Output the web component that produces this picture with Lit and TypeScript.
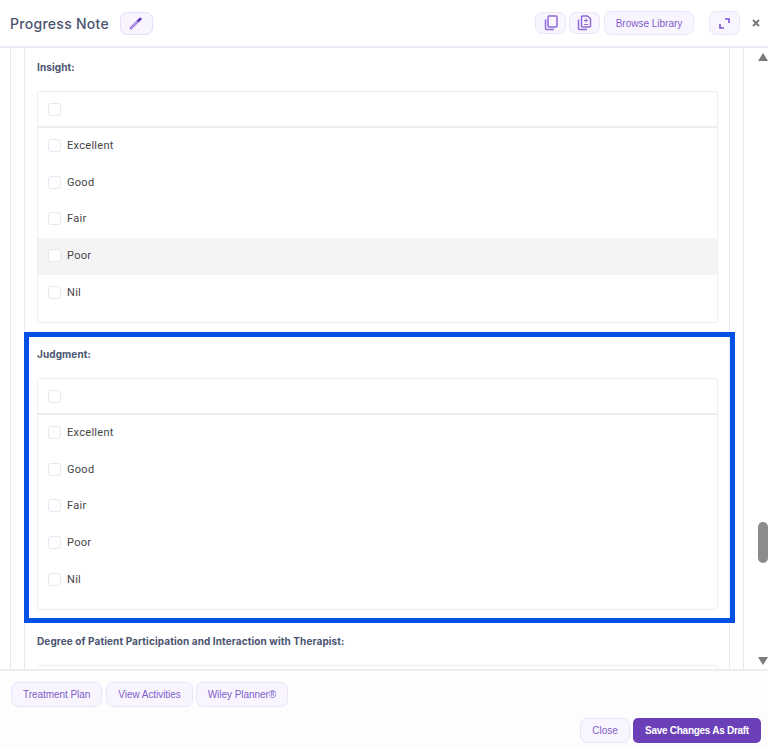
import { LitElement, html, css } from "lit";
import { customElement } from "lit/decorators.js";

const OPTIONS = ["Excellent", "Good", "Fair", "Poor", "Nil"];

@customElement("app-root")
export class AppRoot extends LitElement {
  static styles = css`
    :host { display: flex; flex-direction: column; width: 768px; height: 747px; background: #fff; font-family: Inter, "Liberation Sans", sans-serif; overflow: hidden; position: relative; }
    * { box-sizing: border-box; }
    .header { height: 48px; flex: none; display: flex; align-items: center; padding: 0 5px 0 10px; border-bottom: 2px solid #eceaf6; }
    .title { font-size: 14px; font-weight: 500; color: #4a5470; letter-spacing: 0.28px; margin-right: 11px; }
    .btn { display: inline-flex; align-items: center; justify-content: center; background: #f8f5ff; border: 1.5px solid #ebe4fb; border-radius: 7px; color: #7f5cc8; font-size: 10px; font-family: "Liberation Sans", sans-serif; white-space: nowrap; }
    .edit { width: 33px; height: 23px; border-color: #e6dcfb; }
    .spacer { flex: 1; }
    .icon { width: 31px; height: 22px; margin-right: 3px; }
    .icon.second { margin-right: 4px; }
    .lib { width: 90px; height: 24px; margin-right: 15px; }
    .expand { width: 31px; height: 24px; }
    .x { width: 14px; margin-left: 9px; display: flex; justify-content: center; }
    .body { flex: 1; min-height: 0; display: flex; overflow: hidden; }
    .outer { width: 734px; margin-left: 10px; padding: 0 13px; border-left: 1px solid #eaeaf6; border-right: 1px solid #eaeaf6; }
    .inner { height: 100%; border-left: 1px solid #eaeaf6; border-right: 1px solid #eaeaf6; padding-top: 2px; }
    .section { height: 281px; margin: 0 0 6px 4px; padding: 10.5px 11px 0 8px; }
    .section.mark { outline: 5px solid #0350e4; margin-right: -1px; padding-right: 12px; }
    .label { font-size: 10px; font-weight: 700; color: #4a5470; height: 12px; line-height: 12px; letter-spacing: 0.1px; }
    .card { margin-top: 18.5px; height: 232px; border: 1px solid #eeeef2; border-radius: 3px; }
    .top { height: 36px; display: flex; align-items: center; padding-left: 10px; border-bottom: 2px solid #ececf2; }
    .row { height: 36.7px; display: flex; align-items: center; padding: 0 0 2px 10px; gap: 6px; font-size: 11px; color: #444; font-family: Roboto, sans-serif; letter-spacing: 0.3px; }
    .row.hover { background: #f4f4f4; }
    .check { width: 13px; height: 13px; border: 1px solid #e6e8f2; border-radius: 3px; background: #fff; flex: none; }
    .sb { flex: 1; position: relative; }
    .up, .down { position: absolute; left: 14px; width: 0; height: 0; border-left: 5px solid transparent; border-right: 5px solid transparent; }
    .up { top: 5px; border-bottom: 8px solid #7b7b7b; }
    .down { bottom: 4px; border-top: 8px solid #7b7b7b; }
    .thumb { position: absolute; left: 14px; top: 474px; width: 10px; height: 41px; background: #8b8b8b; border-radius: 5px; }
    .footer { height: 78px; flex: none; border-top: 2px solid #eeeef2; background: #fdfdfd; display: flex; flex-direction: column; padding: 11px 7px 0 11px; }
    .links { display: flex; gap: 4px; }
    .links .btn { height: 25px; padding: 0 11px; font-size: 10px; letter-spacing: -0.05px; }
    .links .btn:nth-child(2) { margin-right: -1px; }
    .actions { display: flex; justify-content: flex-end; gap: 3px; margin-top: 11px; }
    .close { width: 50px; height: 25px; font-size: 10px; }
    .save { width: 128px; height: 25px; background: #6b3fb8; border-radius: 5px; color: #fff; font-family: "Liberation Sans", sans-serif; font-size: 10px; font-weight: 700; letter-spacing: -0.28px; display: inline-flex; align-items: center; justify-content: center; }
    svg { display: block; }
  `;

  card(name: string, cls: string, options: string[], hover?: string) {
    return html`<div class="section ${cls}">
      <div class="label">${name}</div>
      <div class="card">
        <div class="top"><span class="check"></span></div>
        ${options.map((o) => html`<div class="row ${o === hover ? "hover" : ""}"><span class="check"></span>${o}</div>`)}
      </div>
    </div>`;
  }

  render() {
    return html`
      <div class="header">
        <span class="title">Progress Note</span>
        <span class="btn edit"><svg width="14" height="14" viewBox="0 0 14 14" fill="none" stroke-linecap="round"><path d="M2 12.2L10 4.2" stroke="#9268e0" stroke-width="2.6"/><path d="M9 5.2L11.4 2.8" stroke="#5f35b8" stroke-width="2.6"/><path d="M2.6 11.6L9 5.2" stroke="#e4d8fa" stroke-width="0.8"/></svg></span>
        <span class="spacer"></span>
        <span class="btn icon"><svg width="14" height="16" viewBox="0 0 14 16" fill="none" stroke="#8f69d6" stroke-width="1.5"><rect x="4" y="1" width="9" height="11" rx="1"/><path d="M1.5 4.5v9a1 1 0 0 0 1 1h7.5"/></svg></span>
        <span class="btn icon second"><svg width="15" height="16" viewBox="0 0 15 16" fill="none" stroke="#8f69d6" stroke-width="1.5"><path d="M5.5 1h5l3 3v7a1 1 0 0 1-1 1h-7a1 1 0 0 1-1-1V2a1 1 0 0 1 1-1z"/><path d="M1.5 4.5v9a1 1 0 0 0 1 1h7.5"/><path d="M9 3.5v4M7 5.5h4M7 9.5h4" stroke-width="1.1"/></svg></span>
        <span class="btn lib">Browse Library</span>
        <span class="btn expand"><svg width="11" height="11" viewBox="0 0 11 11" fill="none" stroke="#7e4fd0" stroke-width="1.6"><path d="M6 1h4v4M5 10H1V6"/></svg></span>
        <span class="x"><svg width="8" height="8" viewBox="0 0 8 8" stroke="#777" stroke-width="1.9"><path d="M1 1l6 6M7 1l-6 6"/></svg></span>
      </div>
      <div class="body">
        <div class="outer">
          <div class="inner">
            ${this.card("Insight:", "", OPTIONS, "Poor")}
            ${this.card("Judgment:", "mark", OPTIONS)}
            ${this.card("Degree of Patient Participation and Interaction with Therapist:", "", [])}
          </div>
        </div>
        <div class="sb"><div class="up"></div><div class="thumb"></div><div class="down"></div></div>
      </div>
      <div class="footer">
        <div class="links">
          <span class="btn">Treatment Plan</span>
          <span class="btn">View Activities</span>
          <span class="btn">Wiley Planner®</span>
        </div>
        <div class="actions">
          <span class="btn close">Close</span>
          <span class="save">Save Changes As Draft</span>
        </div>
      </div>
    `;
  }
}
